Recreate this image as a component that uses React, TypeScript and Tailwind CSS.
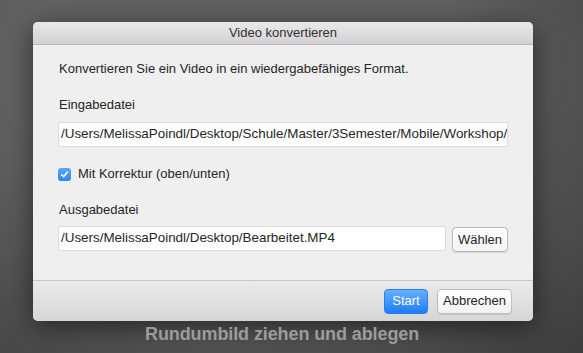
export default function App() {
    return (
        <div
            className="w-[583px] h-[353px] overflow-hidden bg-[radial-gradient(ellipse_at_40%_20%,#626262_45%,#3d3d3d_100%)] text-[13px] text-[#262626]"
            style={{ fontFamily: '"Liberation Sans", Arial, sans-serif' }}
        >
            <div className="pt-[22px] pl-[33px]">
                <div className="w-[500px] rounded-[5px] bg-[#efefef] shadow-[0_6px_28px_rgba(0,0,0,0.55)] overflow-hidden">
                    <div className="h-[23px] flex items-center justify-center bg-gradient-to-b from-[#eae8ea] to-[#d3d1d3] border-b border-[#b8b8b8] text-[#303030]">
                        Video konvertieren
                    </div>

                    <div className="flex flex-col px-[25px] pt-[16px] pb-[28px]">
                        <p className="leading-[16px] pl-[1px]">Konvertieren Sie ein Video in ein wiedergabefähiges Format.</p>

                        <p className="leading-[16px] mt-[20px] pl-[1px]">Eingabedatei</p>
                        <div className="mt-[9px] h-[25px] bg-white border border-[#dcdcdc] flex items-center px-[2px] overflow-hidden whitespace-nowrap text-[13.4px]">
                            /Users/MelissaPoindl/Desktop/Schule/Master/3Semester/Mobile/Workshop/lt.MP4
                        </div>

                        <label className="mt-[19px] flex items-center gap-[7px] leading-[16px]">
                            <span className="w-[13px] h-[13px] rounded-[3px] bg-gradient-to-b from-[#5aa8fb] to-[#2a86f5] flex items-center justify-center">
                                <svg width="9" height="9" viewBox="0 0 9 9">
                                    <path d="M1.6 4.8 L3.6 6.8 L7.4 2" fill="none" stroke="white" strokeWidth="1.6" strokeLinecap="round" strokeLinejoin="round" />
                                </svg>
                            </span>
                            Mit Korrektur (oben/unten)
                        </label>

                        <p className="leading-[16px] mt-[20px] pl-[1px]">Ausgabedatei</p>
                        <div className="mt-[8px] flex items-start gap-[6px]">
                            <div className="w-[388px] h-[25px] bg-white border border-[#dcdcdc] flex items-center px-[2px] overflow-hidden whitespace-nowrap text-[13.4px]">
                                /Users/MelissaPoindl/Desktop/Bearbeitet.MP4
                            </div>
                            <button className="mt-[1px] w-[56px] h-[25px] rounded-[4px] border border-[#b9b9b9] bg-gradient-to-b from-white to-[#f3f3f3] shadow-[0_1px_1px_rgba(0,0,0,0.1)] text-[#262626]">
                                Wählen
                            </button>
                        </div>
                    </div>

                    <div className="h-[41px] border-t border-[#c6c6c6] bg-gradient-to-b from-[#eaeaea] to-[#d6d6d6] flex items-center justify-end gap-[9px] pr-[21px]">
                        <button className="w-[44px] h-[25px] rounded-[4px] bg-gradient-to-b from-[#65b0ff] to-[#1b7cf6] border border-[#2a7fe8] text-white">
                            Start
                        </button>
                        <button className="w-[75px] h-[25px] rounded-[4px] border border-[#bdbdbd] bg-gradient-to-b from-white to-[#f2f2f2] shadow-[0_1px_1px_rgba(0,0,0,0.1)] text-[#262626]">
                            Abbrechen
                        </button>
                    </div>
                </div>
            </div>

            <p className="mt-[2px] pl-[145px] text-[18px] font-bold text-[#9c9c9c] leading-[22px] tracking-[-0.1px]">
                Rundumbild ziehen und ablegen
            </p>
        </div>
    );
}
